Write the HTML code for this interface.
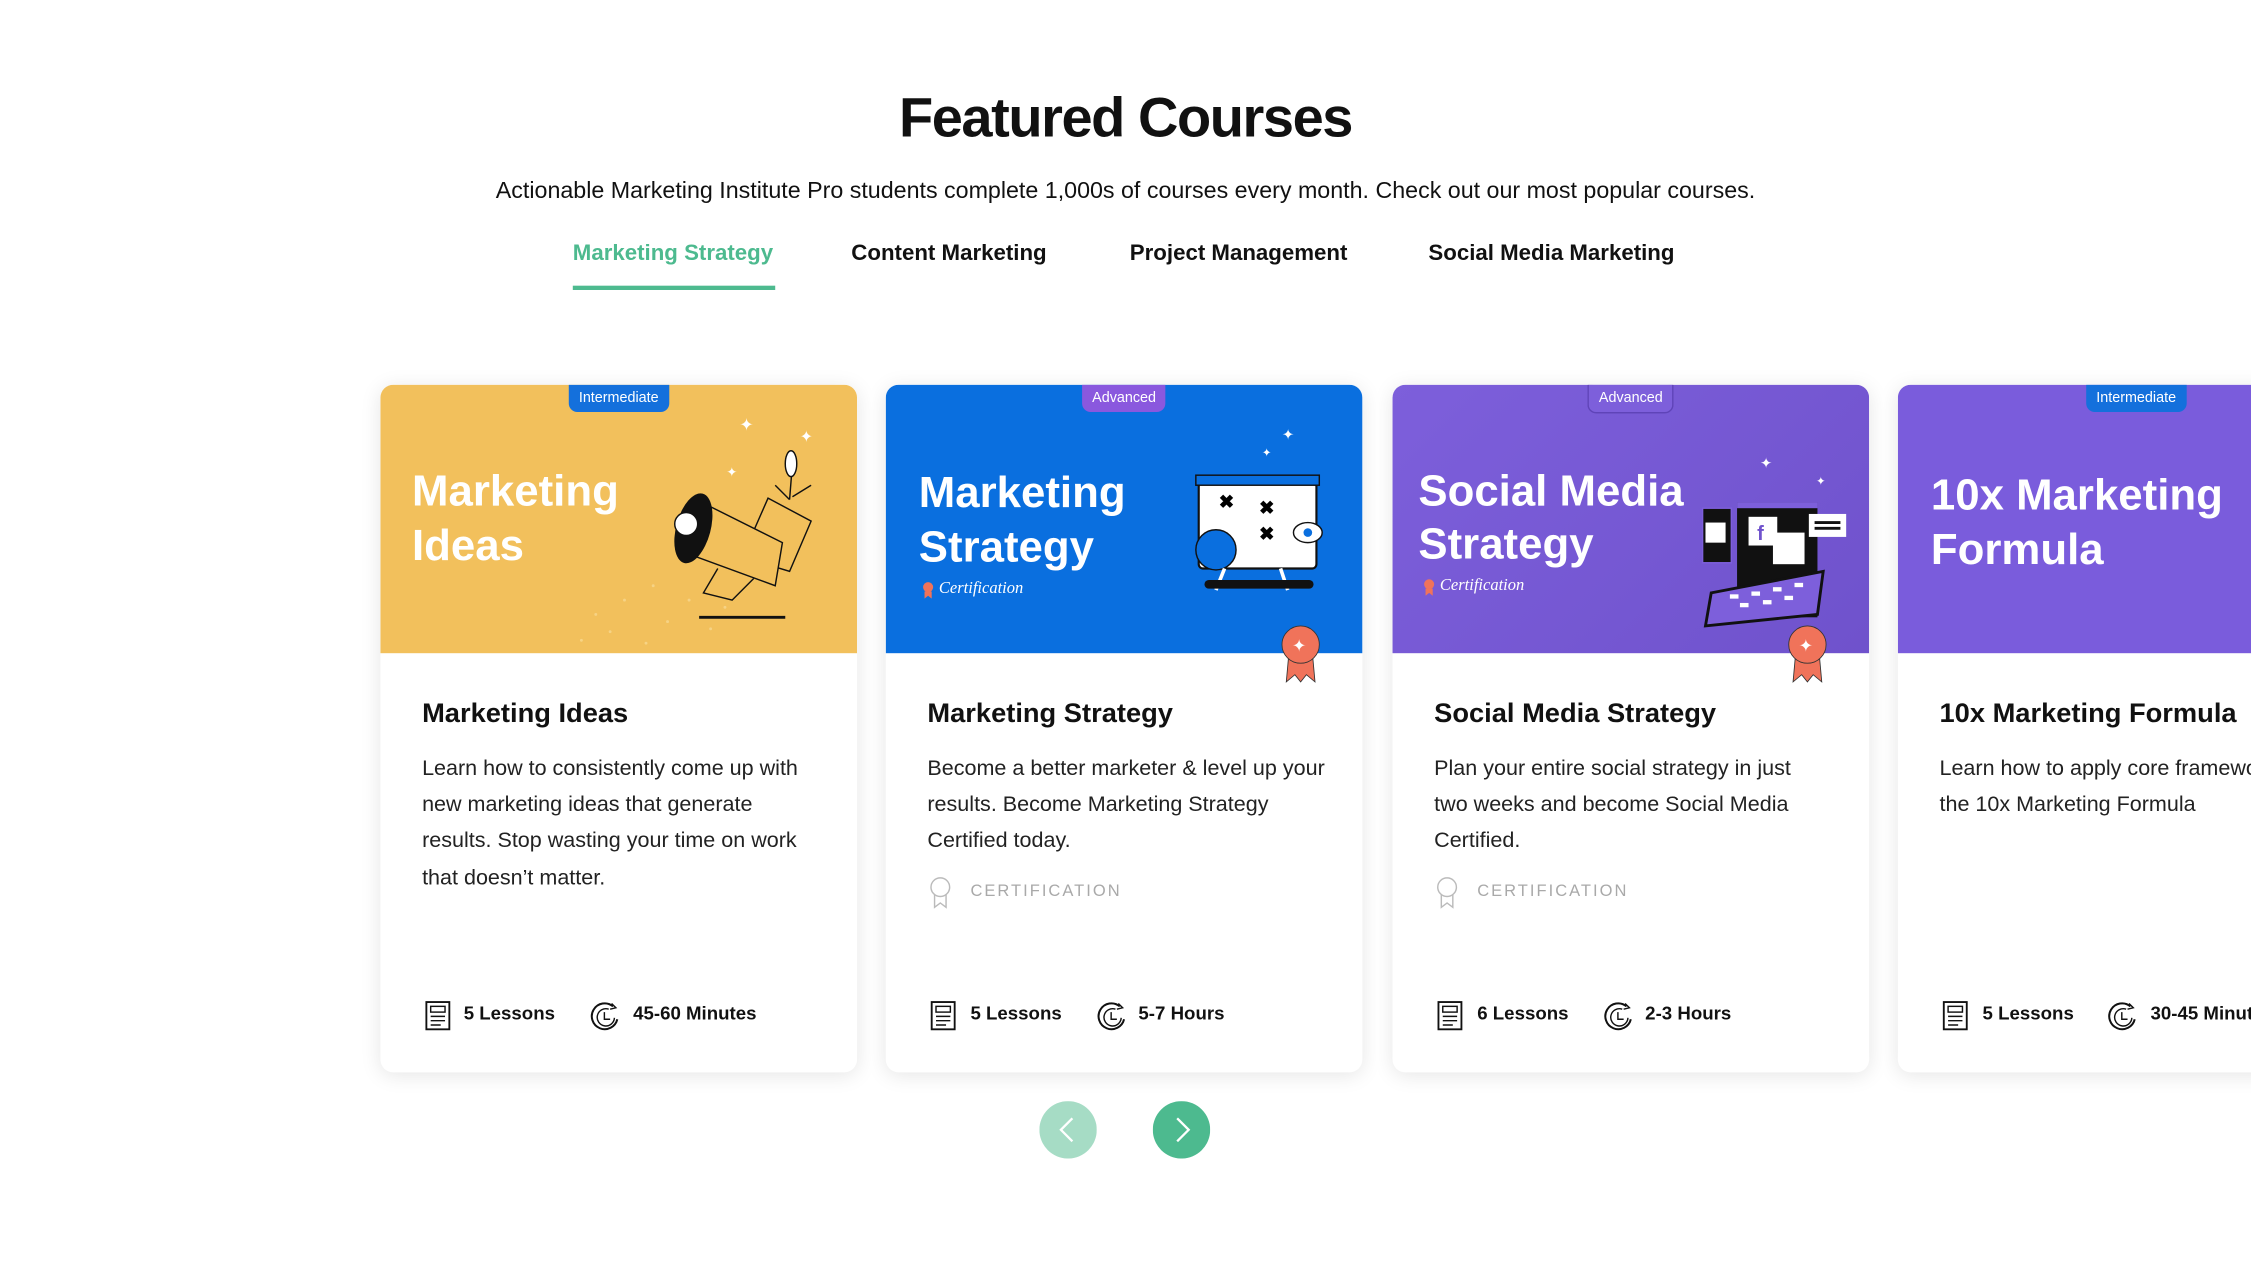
<!DOCTYPE html>
<html><head><meta charset="utf-8"><style>
html,body{margin:0;padding:0;background:#fff;width:2251px;height:1280px;overflow:hidden}
#w{position:absolute;left:0;top:0;width:1568px;height:892px;transform:scale(1.43559);transform-origin:0 0;font-family:"Liberation Sans",sans-serif;color:#111}
.a{position:absolute}
h1{position:absolute;margin:0;left:0;width:1568px;text-align:center;top:61px;font-size:39px;font-weight:bold;letter-spacing:-1px}
.sub{left:0;width:1568px;text-align:center;top:124px;font-size:16.2px;color:#111}
.tab{top:168px;font-size:15.5px;font-weight:bold;white-space:nowrap}
.card{position:absolute;top:268px;width:332px;height:479px;background:#fff;border-radius:9px;overflow:hidden;box-shadow:0 2px 14px rgba(0,0,0,.10)}
.img{position:absolute;left:0;top:0;width:100%;height:187px}
.badge{position:absolute;top:0;height:19px;line-height:20px;font-size:10px;color:#fff;padding:0 7px;border-radius:0 0 6px 6px;transform:translateX(-50%);left:50%}
.it{position:absolute;left:22px;top:55px;color:#fff;font-weight:bold;font-size:30.5px;line-height:38px}
.cert{position:absolute;font-family:"Liberation Serif",serif;font-style:italic;color:#fff;font-size:11.5px}
.t{position:absolute;left:29px;top:219px;font-size:19px;font-weight:bold}
.d{position:absolute;left:29px;top:255px;width:280px;font-size:15px;line-height:25.2px;color:#222}
.cl{position:absolute;left:29px;top:347px;font-size:11.5px;letter-spacing:1.4px;color:#a9a9a9}
.ft{position:absolute;top:430px;font-size:13px;font-weight:bold;white-space:nowrap}
</style></head><body><div id="w">
<h1>Featured Courses</h1>
<div class="a sub">Actionable Marketing Institute Pro students complete 1,000s of courses every month. Check out our most popular courses.</div>
<div class="a tab" style="left:399px;color:#4dba8f">Marketing Strategy</div>
<div class="a" style="left:399px;top:199px;width:141px;height:3px;background:#4dba8f"></div>
<div class="a tab" style="left:593px">Content Marketing</div>
<div class="a tab" style="left:787px">Project Management</div>
<div class="a tab" style="left:995px">Social Media Marketing</div>

<!-- card 1 -->
<div class="card" style="left:265px">
<div class="img" style="background:#f2c05c">
<svg class="a" style="left:0;top:0" width="332" height="187">
<g fill="#f8d890" opacity=".8"><circle cx="150" cy="160" r="1"/><circle cx="170" cy="150" r="1"/><circle cx="190" cy="140" r="1"/><circle cx="160" cy="172" r="1"/><circle cx="200" cy="165" r="1"/><circle cx="215" cy="150" r="1"/><circle cx="230" cy="170" r="1"/><circle cx="185" cy="180" r="1"/><circle cx="140" cy="178" r="1"/><circle cx="240" cy="155" r="1"/></g>
<path d="M270 79 L300 95 L285 130 L252 120 Z" fill="#f2c05c" stroke="#111"/>
<path d="M220 80 L280 110 L275 140 L215 118 Z" fill="#f2c05c" stroke="#111"/>
<ellipse cx="218" cy="100" rx="12" ry="25" fill="#111" transform="rotate(15 218 100)"/>
<circle cx="213" cy="97" r="8" fill="#fff" stroke="#111"/>
<path d="M235 128 L225 145 L245 150 L260 135" fill="#f2c05c" stroke="#111"/>
<line x1="222" y1="162" x2="282" y2="162" stroke="#111" stroke-width="2"/>
<path d="M285 80 L287 55 M285 80 L275 70 M287 78 L300 70" stroke="#111"/>
<ellipse cx="286" cy="55" rx="4" ry="9" fill="#fff" stroke="#111"/>
<text x="250" y="32" fill="#fff" font-size="12">✦</text><text x="292" y="40" fill="#fff" font-size="11">✦</text><text x="241" y="64" fill="#fff" font-size="9">✦</text>
</svg>
<div class="it">Marketing<br>Ideas</div>
<div class="badge" style="background:#1470dc">Intermediate</div>
</div>
<div class="t">Marketing Ideas</div>
<div class="d">Learn how to consistently come up with new marketing ideas that generate results. Stop wasting your time on work that doesn’t matter.</div>
<svg class="a" style="left:30px;top:429px" width="20" height="22"><rect x="2" y="1" width="16" height="19" fill="none" stroke="#111" stroke-width="1.3"/><rect x="5" y="4" width="10" height="4" fill="none" stroke="#111"/><path d="M5 11h10M5 14h10M5 17h7" stroke="#111"/></svg>
<div class="ft" style="left:58px">5 Lessons</div>
<svg class="a" style="left:146px;top:429px" width="22" height="22"><path d="M16 4 A9 9 0 1 0 19 13" fill="none" stroke="#111" stroke-width="1.4"/><path d="M13 6 A6 6 0 1 0 17 12" fill="none" stroke="#111"/><path d="M10 8v5h4M15 2l3 3-4 1" fill="none" stroke="#111"/></svg>
<div class="ft" style="left:176px">45-60 Minutes</div>
</div>

<!-- card 2 -->
<div class="card" style="left:617px">
<div class="img" style="background:#0a6fdf">
<svg class="a" style="left:0;top:0" width="333" height="187">
<rect x="218" y="68" width="82" height="60" rx="3" fill="#fff" stroke="#111" stroke-width="1.5"/>
<rect x="216" y="63" width="86" height="7" fill="#0a6fdf" stroke="#111"/>
<text x="232" y="86" font-size="13" font-weight="bold">✖</text><text x="260" y="90" font-size="13" font-weight="bold">✖</text><text x="260" y="108" font-size="13" font-weight="bold">✖</text>
<circle cx="230" cy="115" r="14" fill="#0a6fdf" stroke="#111"/>
<ellipse cx="294" cy="103" rx="10" ry="7" fill="#fff" stroke="#111"/><circle cx="294" cy="103" r="3" fill="#0a6fdf"/>
<path d="M236 128 L230 143 M275 128 L280 143" stroke="#fff" stroke-width="2.5"/>
<rect x="222" y="136" width="76" height="6" rx="3" fill="#111"/>
<text x="276" y="38" fill="#fff" font-size="10">✦</text><text x="262" y="50" fill="#fff" font-size="8">✦</text>
</svg>
<div class="it" style="left:23px;top:56px">Marketing<br>Strategy</div>
<div class="cert" style="left:37px;top:136px">Certification</div>
<svg class="a" style="left:25px;top:137px" width="9" height="12"><circle cx="4.5" cy="4" r="3.5" fill="#f0735a"/><path d="M2 7v5l2.5-2 2.5 2V7" fill="#f0735a"/></svg>
<div class="badge" style="background:#8a58de">Advanced</div>
</div>
<svg class="a" style="left:274px;top:167px" width="30" height="42"><path d="M7 18 L5 40 L11 35 L15 40 L19 35 L25 40 L23 18Z" fill="#f0735a" stroke="#333" stroke-width=".6"/><circle cx="15" cy="14" r="13" fill="#f0735a" stroke="#333" stroke-width=".6"/><text x="9" y="19" fill="#fff" font-size="12">✦</text></svg>
<div class="t">Marketing Strategy</div>
<div class="d">Become a better marketer &amp; level up your results. Become Marketing Strategy Certified today.</div>
<svg class="a" style="left:30px;top:342px" width="16" height="24"><circle cx="8" cy="8" r="6.5" fill="none" stroke="#bbb"/><path d="M4 13v9l4-3 4 3v-9" fill="none" stroke="#bbb"/></svg>
<div class="cl" style="left:59px">CERTIFICATION</div>
<svg class="a" style="left:30px;top:429px" width="20" height="22"><rect x="2" y="1" width="16" height="19" fill="none" stroke="#111" stroke-width="1.3"/><rect x="5" y="4" width="10" height="4" fill="none" stroke="#111"/><path d="M5 11h10M5 14h10M5 17h7" stroke="#111"/></svg>
<div class="ft" style="left:59px">5 Lessons</div>
<svg class="a" style="left:147px;top:429px" width="22" height="22"><path d="M16 4 A9 9 0 1 0 19 13" fill="none" stroke="#111" stroke-width="1.4"/><path d="M13 6 A6 6 0 1 0 17 12" fill="none" stroke="#111"/><path d="M10 8v5h4M15 2l3 3-4 1" fill="none" stroke="#111"/></svg>
<div class="ft" style="left:176px">5-7 Hours</div>
</div>

<!-- card 3 -->
<div class="card" style="left:970px">
<div class="img" style="background:linear-gradient(135deg,#7d5fdb,#6f52cc)">
<svg class="a" style="left:0;top:0" width="332" height="187">
<rect x="240" y="82" width="56" height="80" fill="#111"/>
<rect x="240" y="82" width="56" height="4" fill="#7d5fdb"/>
<path d="M222 145 L300 130 L296 160 L218 168Z" fill="#7d5fdb" stroke="#111" stroke-width="2"/>
<g fill="#fff"><rect x="235" y="146" width="6" height="3"/><rect x="250" y="144" width="6" height="3"/><rect x="265" y="141" width="6" height="3"/><rect x="280" y="138" width="6" height="3"/><rect x="242" y="152" width="6" height="3"/><rect x="258" y="150" width="6" height="3"/><rect x="273" y="147" width="6" height="3"/></g>
<rect x="216" y="86" width="20" height="38" fill="#111" stroke="#7d5fdb"/>
<rect x="218" y="96" width="14" height="14" fill="#fff"/>
<rect x="248" y="92" width="20" height="20" fill="#fff"/><text x="254" y="108" fill="#6f52cc" font-size="14" font-weight="bold">f</text>
<rect x="265" y="103" width="22" height="22" fill="#fff"/>
<rect x="290" y="90" width="26" height="16" fill="#fff"/><path d="M294 96h18M294 100h18" stroke="#111" stroke-width="2"/>
<text x="256" y="58" fill="#fff" font-size="10">✦</text><text x="295" y="70" fill="#fff" font-size="8">✦</text>
</svg>
<div class="it" style="left:18px;top:56px;line-height:37px">Social Media<br>Strategy</div>
<div class="cert" style="left:33px;top:134px">Certification</div>
<svg class="a" style="left:21px;top:135px" width="9" height="12"><circle cx="4.5" cy="4" r="3.5" fill="#f0735a"/><path d="M2 7v5l2.5-2 2.5 2V7" fill="#f0735a"/></svg>
<div class="badge" style="background:#7d5fdb;border:1px solid #5f44b8;border-top:0">Advanced</div>
</div>
<svg class="a" style="left:274px;top:167px" width="30" height="42"><path d="M7 18 L5 40 L11 35 L15 40 L19 35 L25 40 L23 18Z" fill="#f0735a" stroke="#333" stroke-width=".6"/><circle cx="15" cy="14" r="13" fill="#f0735a" stroke="#333" stroke-width=".6"/><text x="9" y="19" fill="#fff" font-size="12">✦</text></svg>
<div class="t">Social Media Strategy</div>
<div class="d" style="width:262px">Plan your entire social strategy in just two weeks and become Social Media Certified.</div>
<svg class="a" style="left:30px;top:342px" width="16" height="24"><circle cx="8" cy="8" r="6.5" fill="none" stroke="#bbb"/><path d="M4 13v9l4-3 4 3v-9" fill="none" stroke="#bbb"/></svg>
<div class="cl" style="left:59px">CERTIFICATION</div>
<svg class="a" style="left:30px;top:429px" width="20" height="22"><rect x="2" y="1" width="16" height="19" fill="none" stroke="#111" stroke-width="1.3"/><rect x="5" y="4" width="10" height="4" fill="none" stroke="#111"/><path d="M5 11h10M5 14h10M5 17h7" stroke="#111"/></svg>
<div class="ft" style="left:59px">6 Lessons</div>
<svg class="a" style="left:147px;top:429px" width="22" height="22"><path d="M16 4 A9 9 0 1 0 19 13" fill="none" stroke="#111" stroke-width="1.4"/><path d="M13 6 A6 6 0 1 0 17 12" fill="none" stroke="#111"/><path d="M10 8v5h4M15 2l3 3-4 1" fill="none" stroke="#111"/></svg>
<div class="ft" style="left:176px">2-3 Hours</div>
</div>

<!-- card 4 -->
<div class="card" style="left:1322px">
<div class="img" style="background:#7a5cdc">
<div class="it" style="left:23px;top:58px">10x Marketing<br>Formula</div>
<div class="badge" style="background:#1470dc">Intermediate</div>
</div>
<div class="t">10x Marketing Formula</div>
<div class="d">Learn how to apply core frameworks from the 10x Marketing Formula</div>
<svg class="a" style="left:30px;top:429px" width="20" height="22"><rect x="2" y="1" width="16" height="19" fill="none" stroke="#111" stroke-width="1.3"/><rect x="5" y="4" width="10" height="4" fill="none" stroke="#111"/><path d="M5 11h10M5 14h10M5 17h7" stroke="#111"/></svg>
<div class="ft" style="left:59px">5 Lessons</div>
<svg class="a" style="left:146px;top:429px" width="22" height="22"><path d="M16 4 A9 9 0 1 0 19 13" fill="none" stroke="#111" stroke-width="1.4"/><path d="M13 6 A6 6 0 1 0 17 12" fill="none" stroke="#111"/><path d="M10 8v5h4M15 2l3 3-4 1" fill="none" stroke="#111"/></svg>
<div class="ft" style="left:176px">30-45 Minutes</div>
</div>

<svg class="a" style="left:724px;top:767px" width="40" height="40"><circle cx="20" cy="20" r="20" fill="#a6dcc5"/><path d="M23 12 L15 20 L23 28" fill="none" stroke="#fff" stroke-width="1.6"/></svg>
<svg class="a" style="left:803px;top:767px" width="40" height="40"><circle cx="20" cy="20" r="20" fill="#4dba8f"/><path d="M17 12 L25 20 L17 28" fill="none" stroke="#fff" stroke-width="1.6"/></svg>
</div></body></html>
